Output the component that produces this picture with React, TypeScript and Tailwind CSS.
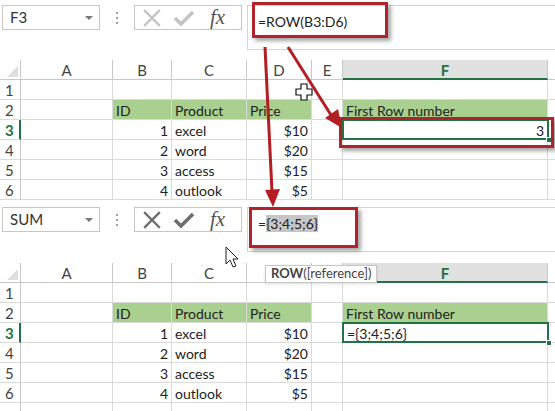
import React from "react";

type Row = { n: number; b?: string; c?: string; d?: string; f?: string; green?: boolean };

const rows: Row[] = [
  { n: 1 },
  { n: 2, b: "ID", c: "Product", d: "Price", f: "First Row number", green: true },
  { n: 3, b: "1", c: "excel", d: "$10" },
  { n: 4, b: "2", c: "word", d: "$20" },
  { n: 5, b: "3", c: "access", d: "$15" },
  { n: 6, b: "4", c: "outlook", d: "$5" },
];

const font = { fontFamily: 'Lato, "Liberation Sans", Arial, sans-serif' };

function XIcon({ color }: { color: string }) {
  return (
    <svg width="20" height="20" viewBox="0 0 20 20">
      <path d="M3 3 L17 17 M17 3 L3 17" stroke={color} strokeWidth="2.4" strokeLinecap="square" />
    </svg>
  );
}

function CheckIcon({ color }: { color: string }) {
  return (
    <svg width="22" height="20" viewBox="0 0 22 20">
      <path d="M2 10 L8 16 L20 4" stroke={color} strokeWidth="3.6" fill="none" />
    </svg>
  );
}

function Toolbar({ name, editing, children }: { name: string; editing: boolean; children: React.ReactNode }) {
  const iconColor = editing ? "#6e6e6e" : "#c4c4c4";
  return (
    <div className="flex items-start h-[45px]">
      <div className="ml-[2px] w-[98px] h-[25px] border border-[#c6c6c6] flex items-center justify-between pl-[7px] pr-[6px] text-[15px] text-[#333]">
        <span>{name}</span>
        <span className="w-0 h-0 border-l-[4px] border-r-[4px] border-t-[4px] border-l-transparent border-r-transparent border-t-[#777]" />
      </div>
      <div className="w-[34px] h-[25px] flex flex-col items-center justify-center gap-[3px]">
        <span className="w-[2px] h-[2px] bg-[#a0a0a0]" />
        <span className="w-[2px] h-[2px] bg-[#a0a0a0]" />
        <span className="w-[2px] h-[2px] bg-[#a0a0a0]" />
      </div>
      <div className="w-[108px] h-[25px] border border-[#c6c6c6] flex items-center pl-[7px]">
        <div className="w-[20px] flex justify-center">
          <XIcon color={iconColor} />
        </div>
        <div className="w-[24px] ml-[10px] flex justify-center">
          <CheckIcon color={iconColor} />
        </div>
        <span
          className="ml-[14px] text-[21px] italic text-[#555] leading-none"
          style={{ fontFamily: '"Liberation Serif", "Times New Roman", serif' }}
        >
          fx
        </span>
      </div>
      <div className="ml-[5px] flex-1 h-[45px] border border-[#d4d4d4] border-r-0 pl-[10px] pt-[5px] text-[14px] text-[#222]">
        {children}
      </div>
    </div>
  );
}

function Cell({
  children,
  green,
  right,
}: {
  children?: React.ReactNode;
  green?: boolean;
  right?: boolean;
}) {
  return (
    <div
      className={`h-[20px] border-r border-b border-[#dadada] px-[3px] pt-[2px] flex items-center text-[14px] text-[#222] whitespace-nowrap ${
        green ? "bg-[#a9d08e]" : "bg-white"
      } ${right ? "justify-end" : ""}`}
    >
      {children}
    </div>
  );
}

function Grid({ f3, covered }: { f3: React.ReactNode; covered?: boolean }) {
  // in the lower sheet the D and E headers sit under the tooltip
  const heads = covered ? ["A", "B", "C", "", ""] : ["A", "B", "C", "D", "E"];
  return (
    <div className="grid grid-cols-[21px_92px_59px_75px_65px_31px_205px_1fr]">
      <div className="h-[20px] border-r border-b border-[#c8c8c8] bg-white relative">
        <svg className="absolute right-[2px] bottom-[2px]" width="11" height="11">
          <polygon points="11,0 11,11 0,11" fill="#dedede" />
        </svg>
      </div>
      {heads.map((h, i) => (
        <div
          key={i}
          className="h-[20px] border-r border-b border-[#c8c8c8] pt-[2px] flex items-center justify-center text-[15px] text-[#444]"
        >
          {h}
        </div>
      ))}
      <div className="h-[20px] bg-[#e1e1e1] border-r border-[#c8c8c8] border-b-2 border-b-[#217346] pt-[2px] flex items-center justify-center text-[15px] font-bold text-[#217346]">
        F
      </div>
      <div className="h-[20px] border-b border-[#c8c8c8]" />
      {rows.map((r) => (
        <React.Fragment key={r.n}>
          <div
            className={`h-[20px] border-b border-[#dadada] pl-[5px] pt-[2px] flex items-center text-[15px] ${
              r.n === 3
                ? "font-bold text-[#217346] border-r-2 border-r-[#217346]"
                : "text-[#444] border-r border-r-[#c8c8c8]"
            }`}
          >
            {r.n}
          </div>
          <Cell />
          <Cell green={r.green} right={!r.green}>
            {r.b}
          </Cell>
          <Cell green={r.green}>{r.c}</Cell>
          <Cell green={r.green} right={!r.green}>
            {r.d}
          </Cell>
          <Cell />
          {r.n === 3 ? (
            <div className="h-[20px] relative border-b border-[#dadada]">
              <div className="absolute -left-[1px] -top-[1px] -right-[1px] -bottom-[1px] border-2 border-[#217346]" />
              <div className="absolute -right-[4px] -bottom-[4px] w-[6px] h-[6px] bg-[#217346] border border-white" />
              <div className="relative h-full flex items-center px-[4px] pt-[2px] text-[14px] text-[#222]">{f3}</div>
            </div>
          ) : (
            <Cell green={r.green}>{r.f}</Cell>
          )}
          <div className="h-[20px] border-b border-[#dadada]" />
        </React.Fragment>
      ))}
    </div>
  );
}

export default function App() {
  return (
    <div className="relative w-[555px] h-[411px] bg-white overflow-hidden" style={font}>
      {/* top panel */}
      <div className="pt-[5px]">
        <Toolbar name="F3" editing={false}>
          =ROW(B3:D6)
        </Toolbar>
        <div className="mt-[10px]">
          <Grid f3={<span className="w-full text-right">3</span>} />
        </div>
      </div>

      {/* bottom panel */}
      <div className="pt-[7px]">
        <Toolbar name="SUM" editing={true}>
          =<span className="bg-[#c6c6c6]">{"{3;4;5;6}"}</span>
        </Toolbar>
        <div className="mt-[11px]">
          <Grid covered f3={<span>{"={3;4;5;6}"}</span>} />
          <div className="grid grid-cols-[21px_92px_59px_75px_65px_31px_205px_1fr] h-[10px]">
            <div className="border-r border-[#c8c8c8]" />
            <div className="border-r border-[#dadada]" />
            <div className="border-r border-[#dadada]" />
            <div className="border-r border-[#dadada]" />
            <div className="border-r border-[#dadada]" />
            <div className="border-r border-[#dadada]" />
            <div className="border-r border-[#dadada]" />
            <div />
          </div>
        </div>
      </div>

      {/* tooltip */}
      <div className="absolute left-[265px] top-[265px] h-[18px] bg-white border border-[#c6c6c6] shadow-sm flex items-center px-[5px] whitespace-nowrap text-[13px] text-[#444]">
        <span className="font-bold">ROW</span>
        <span>([reference])</span>
      </div>

      {/* red annotation boxes */}
      <div className="absolute left-[252px] top-[2px] w-[136px] h-[36px] border-[3px] border-[#b0232a] shadow-[3px_3px_4px_rgba(0,0,0,0.35)]" />
      <div className="absolute left-[339px] top-[117px] w-[215px] h-[31px] border-[3px] border-[#b0232a] shadow-[3px_3px_4px_rgba(0,0,0,0.35)]" />
      <div className="absolute left-[249px] top-[207px] w-[109px] h-[41px] border-[3px] border-[#b0232a] shadow-[3px_3px_4px_rgba(0,0,0,0.35)]" />

      {/* arrows and cursors */}
      <svg className="absolute left-0 top-0 pointer-events-none" width="555" height="411">
        <line x1="265" y1="47" x2="272" y2="192" stroke="#b31e24" strokeWidth="3" />
        <polygon points="273,207 265,190 280,189" fill="#b31e24" />
        <line x1="288" y1="47" x2="331" y2="115" stroke="#b31e24" strokeWidth="3" />
        <polygon points="342,128 325,118 338,109" fill="#b31e24" />
        {/* plus cursor */}
        <path
          d="M301 84 h6 v5 h5 v6 h-5 v5 h-6 v-5 h-5 v-6 h5 z"
          fill="white"
          stroke="#111"
          strokeWidth="1.2"
        />
        {/* arrow cursor */}
        <path
          d="M226 247 L226 264 L230 260 L233 267 L236 266 L233 259 L238 259 Z"
          fill="white"
          stroke="#222"
          strokeWidth="1"
        />
      </svg>
    </div>
  );
}
